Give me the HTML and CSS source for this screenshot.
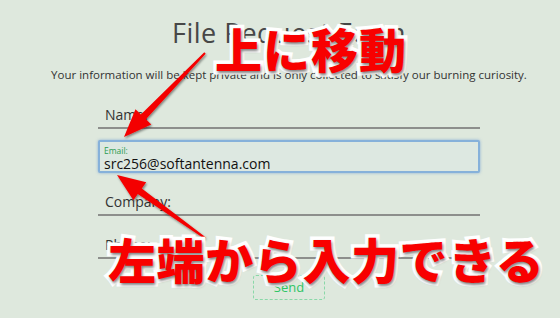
FILE: index.html
```html
<!DOCTYPE html>
<html lang="en">
<head>
<meta charset="utf-8">
<link rel="stylesheet" href="styles.css">
</head>
<body>
<div class="page">
  <header class="head">
    <h1 class="title">File Request Form</h1>
    <p class="sub">Your information will be kept private and is only collected to satisfy our burning curiosity.</p>
  </header>
  <form class="form">
    <div class="field"><span class="label">Name:</span></div>
    <div class="field active">
      <span class="mini">Email:</span>
      <span class="value">src256@softantenna.com</span>
    </div>
    <div class="field"><span class="label">Company:</span></div>
    <div class="field"><span class="label">Phone:</span></div>
    <div class="actions"><span class="send">Send</span></div>
  </form>

  <svg class="arrows" width="560" height="318" viewBox="0 0 560 318">
    <defs>
      <filter id="sh" x="-20%" y="-20%" width="140%" height="140%">
        <feDropShadow dx="1" dy="1.5" stdDeviation="1.2" flood-color="#000" flood-opacity="0.45"/>
      </filter>
    </defs>
    <polygon filter="url(#sh)" fill="#f40000" points="205.7,53.7 145.9,119.2 151.3,124.4 124,137 135.5,109.2 140.9,114.4 204.3,52.3"/>
    <polygon filter="url(#sh)" fill="#f40000" points="205.6,237.2 141.8,188.4 146.2,182.3 117,175 133.4,200.3 137.8,194.1 204.4,238.8"/>
  </svg>
  <div class="callout c1">上に移動</div>
  <div class="callout c2">左端から入力できる</div>
</div>
</body>
</html>
```

FILE: styles.css
```css
* { box-sizing: border-box; }
html, body { margin: 0; padding: 0; }
body {
  background: #dee8dd;
  font-family: "Open Sans", "Liberation Sans", sans-serif;
  color: #333;
  width: 560px;
  height: 318px;
  overflow: hidden;
}
.page {
  position: relative;
  width: 560px;
  height: 318px;
  padding-left: 18px;
}
.head {
  text-align: center;
  padding-top: 16px;
}
.title {
  margin: 0;
  font-size: 27px;
  font-weight: 400;
  line-height: 34px;
  color: #474747;
  letter-spacing: 0.5px;
}
.sub {
  margin: 18px 0 0;
  font-size: 11.5px;
  line-height: 14px;
  color: #333;
}
.form {
  width: 382px;
  margin: 15px auto 0;
  display: flex;
  flex-direction: column;
  gap: 11px;
}
.field {
  height: 32px;
  display: flex;
  align-items: flex-end;
  padding: 0 7px 4px;
  border-bottom: 2px solid #8d8f8c;
}
.label {
  font-size: 14px;
  line-height: 16px;
  color: #333;
}
.field.active {
  height: 33px;
  flex-direction: column;
  align-items: flex-start;
  justify-content: flex-start;
  padding: 3px 4px 0;
  border: 2px solid #86b1da;
  border-radius: 2px;
  box-shadow: 0 0 3px rgba(100, 150, 210, 0.7);
  background: #dde8e1;
}
.mini {
  font-size: 8.5px;
  line-height: 11px;
  color: #2e9c52;
}
.value {
  font-size: 14px;
  line-height: 15px;
  color: #111;
}
.actions {
  display: flex;
  justify-content: center;
  margin-top: 5px;
}
.send {
  width: 72px;
  height: 25px;
  border: 1px dashed #8ad8a8;
  border-radius: 3px;
  text-align: center;
  font-size: 13px;
  line-height: 23px;
  color: #2fc465;
}
.arrows {
  position: absolute;
  left: 0;
  top: 0;
}
.callout {
  position: absolute;
  font-family: "Noto Sans CJK JP", sans-serif;
  font-weight: 900;
  color: #f80000;
  line-height: 1;
  white-space: nowrap;
  -webkit-text-stroke: 7px #fff;
  paint-order: stroke fill;
  text-shadow: 1px 2px 3px rgba(0, 0, 0, 0.5);
}
.c1 {
  left: 215px;
  top: 24px;
  font-size: 47px;
  letter-spacing: 1px;
}
.c2 {
  left: 108px;
  top: 234px;
  font-size: 48px;
  letter-spacing: 0.6px;
}
```
